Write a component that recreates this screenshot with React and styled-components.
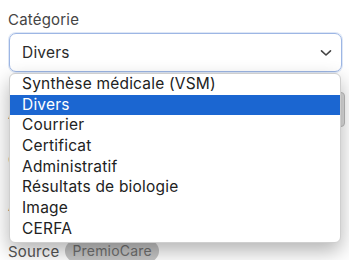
import React from 'react'
import styled, { createGlobalStyle } from 'styled-components'

const Global = createGlobalStyle`
body {
  margin: 0;
  background: #fff;
  font-family: Inter, "Open Sans", sans-serif;
  color: #2b2b2b;
  letter-spacing: 0.2px;
}
`

const Page = styled.div`
width: 349px;
height: 260px;
overflow: hidden;
padding: 10px 7px 0 8px;
box-sizing: border-box;
display: flex;
flex-direction: column;
& > * {
  flex-shrink: 0;
}
`

const Label = styled.div`
font-size: 15px;
line-height: 20px;
color: #444;
`

const SelectWrap = styled.div`
position: relative;
margin-top: 3px;
margin-left: 1px;
`

const SelectBox = styled.div`
height: 39px;
box-sizing: border-box;
border: 1px solid #9db6e4;
border-radius: 7px;
box-shadow: 0 0 0 1px rgba(160, 185, 230, 0.35);
display: flex;
align-items: center;
justify-content: space-between;
padding: 0 9px 0 12px;
font-size: 15.5px;
color: #2b2b2b;
`

const Menu = styled.ul`
position: absolute;
top: 40px;
left: 0;
right: 1px;
margin: 0;
padding: 0 0 2px;
list-style: none;
background: #fff;
border: 1px solid #cfcfcf;
border-radius: 6px;
box-shadow: 0 8px 20px rgba(0, 0, 0, 0.3);
z-index: 2;
overflow: hidden;
`

const Option = styled.li`
height: 20.7px;
line-height: 20.7px;
padding-left: 12px;
font-size: 15.5px;
color: ${p => (p.selected ? '#fff' : '#222')};
background: ${p => (p.selected ? '#1b66d1' : 'transparent')};
`

const Spacer = styled.div`
height: ${p => p.h}px;
`

const Row = styled.div`
display: flex;
align-items: center;
gap: 6px;
height: 46px;
font-size: 15px;
color: #555;
`

const Ghost = styled.div`
margin-left: auto;
align-self: flex-start;
margin-top: 2px;
width: 60px;
height: 33px;
background: #ddd;
border: 1px solid #bbb;
border-radius: 4px;
margin-right: -3px;
`

const Chip = styled.span`
background: #c6c6c6;
color: #707070;
border-radius: 11px;
padding: 2px 7px 3px;
font-size: 14px;
`

const options = [
  'Synthèse médicale (VSM)',
  'Divers',
  'Courrier',
  'Certificat',
  'Administratif',
  'Résultats de biologie',
  'Image',
  'CERFA'
]

function Chevron () {
  return (
    <svg width='12' height='8' viewBox='0 0 12 8'>
      <path d='M1.5 1.8 L6 6 L10.5 1.8' fill='none' stroke='#444' strokeWidth='1.6' strokeLinecap='round' strokeLinejoin='round' />
    </svg>
  )
}

export default function App () {
  return (
    <Page>
      <Global />
      <Label>Catégorie</Label>
      <SelectWrap>
        <SelectBox>
          <span>Divers</span>
          <Chevron />
        </SelectBox>
        <Menu>
          {options.map((o, i) => (
            <Option key={i} selected={o === 'Divers'}>{o}</Option>
          ))}
        </Menu>
      </SelectWrap>
      <Spacer h={18} />
      <Row>Auteur<Ghost /></Row>
      <Row>Créé le</Row>
      <Row>Ajouté par</Row>
      <Row>Source <Chip>PremioCare</Chip></Row>
    </Page>
  )
}
